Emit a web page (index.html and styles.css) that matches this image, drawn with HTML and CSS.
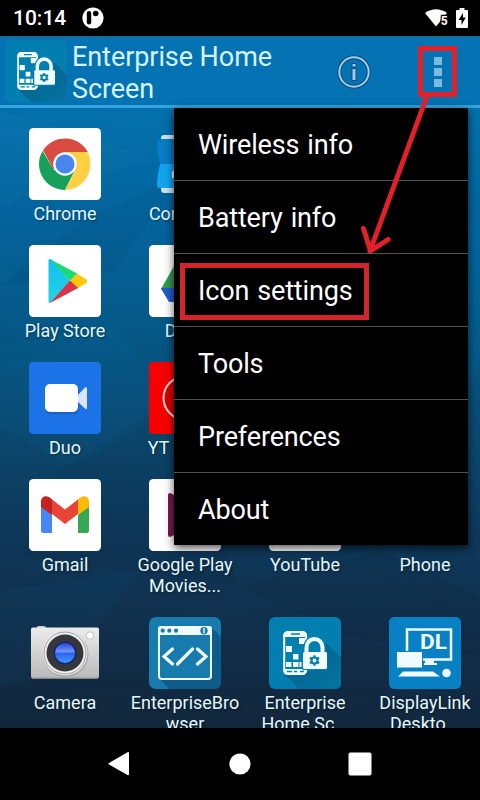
FILE: index.html
```html
<!DOCTYPE html>
<html lang="en">
<head>
<meta charset="utf-8">
<title>Enterprise Home Screen</title>
<link rel="stylesheet" href="styles.css">
</head>
<body>
<svg class="defs" width="0" height="0" aria-hidden="true">
  <defs>
    <linearGradient id="cam" x1="0" y1="0" x2="0" y2="1"><stop offset="0" stop-color="#ececec"/><stop offset="1" stop-color="#b9b9b9"/></linearGradient>
    <linearGradient id="lens" x1="0" y1="0" x2="0" y2="1"><stop offset="0" stop-color="#2949d6"/><stop offset=".45" stop-color="#7495ff"/><stop offset=".5" stop-color="#2f60ee"/><stop offset="1" stop-color="#3f9cff"/></linearGradient>
    <linearGradient id="play" x1="0" y1="0" x2="0" y2="1"><stop offset="0" stop-color="#14bdf0"/><stop offset="1" stop-color="#20d5e5"/></linearGradient>
    <linearGradient id="long" x1="0" y1="0" x2="1" y2="1"><stop offset="0" stop-color="#035f88"/><stop offset="1" stop-color="#0474a2"/></linearGradient>
    <symbol id="ehs" viewBox="0 0 72 72">
      <rect width="72" height="72" rx="6" fill="#037eb0"/>
      <path d="M57 26L72 41V66Q72 72 66 72H30L16 58L55 52Z" fill="url(#long)"/>
      <rect x="15.200" y="15" width="22" height="42" rx="4.500" fill="#037eb0" stroke="#f2fcff" stroke-width="2"/>
      <path d="M14.200 20V18Q15 14 19 14H33.500Q37 14 38 18V20ZM14.200 52H38V54Q37 58 33.500 58H19Q15 58 14.200 54Z" fill="#f2fcff"/>
      <path d="M22 17H31M18 54.500H23M25 54.500H28M31 54.500H35" stroke="#037eb0" stroke-width="1.500"/>
      <path d="M30 21H36V27H30ZM17 29H23V35H17ZM24 37H29.500V42.500H24ZM17 45H22.500V50H17ZM24 45H29.500V50H24ZM30.500 45H35V50H30.500Z" fill="#f2fcff"/>
      <path d="M37.500 36V30.500A8 8.500 0 0 1 53.500 30.500V36" fill="none" stroke="#037eb0" stroke-width="6.500"/>
      <rect x="32.500" y="34" width="26" height="19" rx="2" fill="#037eb0"/>
      <path d="M37.500 36V30.500A8 8.500 0 0 1 53.500 30.500V36" fill="none" stroke="#f2fcff" stroke-width="4"/>
      <rect x="34" y="35" width="24" height="17" rx="1.500" fill="#f2fcff"/>
      <circle cx="45.500" cy="43.500" r="3" fill="none" stroke="#037eb0" stroke-width="2.200"/>
      <path d="M45.500 38.200V40.500M45.500 46.500V48.800M40.900 40.800L42.900 42M48.100 45L50.100 46.200M40.900 46.200L42.900 45M48.100 42L50.100 40.800" stroke="#037eb0" stroke-width="2.200"/>
    </symbol>
  </defs>
</svg>

<div class="screen">
  <div class="status">
    <span class="clock">10:14</span>
    <svg class="notif" width="22" height="22" viewBox="0 0 22 22"><circle cx="11" cy="11" r="10.600" fill="#fff"/><rect x="4.800" y="4" width="4.400" height="13.500" rx="2.200"/><circle cx="13.700" cy="6.500" r="2.800"/></svg>
    <svg class="wifi" width="23" height="20" viewBox="0 0 23 20"><path d="M0 5Q11 -2.500 22 5L11 18.500Z" fill="#fff"/><text x="15.700" y="17" class="band">5</text></svg>
    <svg width="12" height="20" viewBox="0 0 12 20"><path d="M3.500 0H8.500V2H11Q12 2 12 3V19Q12 20 11 20H1Q0 20 0 19V3Q0 2 1 2H3.500Z" fill="#fff"/><path d="M7 5L2.500 12H5.500V17L9.700 9.500H7Z" fill="#000"/></svg>
  </div>

  <div class="home">
    <svg class="facets" width="480" height="692" viewBox="0 0 480 692" preserveAspectRatio="none">
      <path d="M0 170L65 145L155 125L85 98L0 76Z" fill="#fff" opacity=".018"/>
      <path d="M0 250L115 235L180 140L90 180Z" fill="#000" opacity=".035"/>
      <path d="M0 310L120 290L165 380L70 430L0 390Z" fill="#00a0e0" opacity=".045"/>
      <path d="M60 432L160 372L240 550L20 520Z" fill="#000" opacity=".04"/>
      <path d="M240 550L380 515L480 560V620L350 600Z" fill="#000" opacity=".05"/>
      <path d="M0 555L140 535L60 640L0 650Z" fill="#00a0e0" opacity=".04"/>
      <path d="M450 200L480 180V330L466 350Z" fill="#00a0e0" opacity=".07"/>
    </svg>

    <header class="bar">
      <svg class="logo" width="62" height="62"><use href="#ehs"/></svg>
      <h1 class="title">Enterprise Home Screen</h1>
      <svg class="info" width="34" height="34" viewBox="0 0 34 34"><circle cx="17" cy="17" r="14.700" fill="none" stroke="#104f78" stroke-width="4.200"/><circle cx="17" cy="17" r="14.700" fill="none" stroke="#9bcdec" stroke-width="2"/><path d="M15 8.500H19V12H15ZM15 13.500H19V25.500H15Z" fill="#9bcdec" stroke="#104f78"/></svg>
      <div class="overflow"><i></i><i></i><i></i></div>
    </header>

    <main class="apps">
      <div class="app">
        <svg class="icon" viewBox="0 0 72 72"><rect width="72" height="72" rx="4.500" fill="#fff"/><path d="M13.500 23A26 26 0 0 0 36 62L46 42L36 36L25 42Z" fill="#17a05a"/><path d="M58.500 24A26 26 0 0 1 36 62L46 43L36 24Z" fill="#ffd042"/><path d="M14 22.500L25 42L29 28L36 24H58.800A26 26 0 0 0 14 22.500Z" fill="#d94a40"/><circle cx="36" cy="36" r="11.800" fill="#f7faff"/><circle cx="36" cy="36" r="9.500" fill="#4986ee"/></svg>
        <span>Chrome</span>
      </div>
      <div class="app">
        <svg class="icon" viewBox="0 0 72 72"><path d="M12 10Q12 7 15 7H60V65H15Q12 65 12 61Z" fill="#cfe2ee"/><path d="M10 11H62V36H11Q7 20 8 13Q8 11 10 11Z" fill="#087cc4"/><path d="M11 36H62V60H10Q8 60 8 57Q8 49 11 36Z" fill="#12a5ee"/><path d="M23 50V44Q24 42 28 42H48V50Z" fill="#e7f4ff"/></svg>
        <span>Contacts</span>
      </div>
      <div class="app"></div>
      <div class="app"></div>

      <div class="app">
        <svg class="icon" viewBox="0 0 72 72"><rect width="72" height="72" rx="4.500" fill="#fff"/><path d="M19.500 15Q20 13.500 22 14.500L41 36L22 57.500Q20 58.500 19.500 57Z" fill="url(#play)"/><path d="M21 14L49 29L41 36Z" fill="#18db78"/><path d="M48 28.500L57.500 34.500Q59 36 57.500 38L48 43.500L40.500 36Z" fill="#fdc710"/><path d="M21 58L49 43L41 35.500Z" fill="#db3448"/></svg>
        <span>Play Store</span>
      </div>
      <div class="app">
        <svg class="icon" viewBox="0 0 72 72"><rect width="72" height="72" rx="4.500" fill="#fff"/><path d="M29 14H43L36 27L20 56L12 44Z" fill="#329b4d"/><path d="M12 43H60L53 57H20Z" fill="#245bd0"/><path d="M43 14L60 43H46L33 21Z" fill="#fbbc04"/></svg>
        <span>Drive</span>
      </div>
      <div class="app"></div>
      <div class="app"></div>

      <div class="app">
        <svg class="icon" viewBox="0 0 72 72"><rect width="72" height="72" rx="4.500" fill="#1c73e8"/><rect x="16" y="23.500" width="34" height="29" rx="5" fill="#1555b0" opacity=".55"/><path d="M48 34L56 25.500Q58 24 58 27V46Q58 48 56 46.500L48 39Z" fill="#dbe5fa"/><rect x="16" y="22" width="33" height="28" rx="5" fill="#fff"/></svg>
        <span>Duo</span>
      </div>
      <div class="app">
        <svg class="icon" viewBox="0 0 72 72"><rect width="72" height="72" rx="4.500" fill="#f90000"/><circle cx="36" cy="36" r="21.500" fill="#d80000" stroke="#ffd6d6" stroke-width="2"/><path d="M30 26L46 36L30 46Z" fill="#fff"/></svg>
        <span>YT Music</span>
      </div>
      <div class="app"></div>
      <div class="app"></div>

      <div class="app">
        <svg class="icon" viewBox="0 0 72 72"><rect width="72" height="72" rx="4.500" fill="#fff"/><path d="M12 26L23 35V54H14.500Q12 54 12 51.500Z" fill="#4587f4"/><path d="M60 26L49 35V54H57.500Q60 54 60 51.500Z" fill="#34a852"/><path d="M22.500 20L36 30.500L49.500 20V34.500L36 45L22.500 34.500Z" fill="#e94436"/><path d="M12 28V23C12 17 18 15 23 20.500V36Z" fill="#c5221f"/><path d="M60 28V23C60 17 54 15 49 20.500V36Z" fill="#fbbc04"/></svg>
        <span>Gmail</span>
      </div>
      <div class="app">
        <svg class="icon" viewBox="0 0 72 72"><rect width="72" height="72" rx="4.500" fill="#fff"/><path d="M19 16Q19 14 21 14Q50 27 50 36Q50 45 21 58Q19 58 19 56Z" fill="#751b50"/></svg>
        <span>Google Play Movies...</span>
      </div>
      <div class="app">
        <svg class="icon" viewBox="0 0 72 72"><rect width="72" height="72" rx="4.500" fill="#fff"/></svg>
        <span>YouTube</span>
      </div>
      <div class="app"><div class="icon"></div><span>Phone</span></div>

      <div class="app">
        <svg class="icon" viewBox="0 0 72 72"><path d="M8 11V10Q8 9 10 9H15Q17 9 17 11Z" fill="#c9c9c9"/><rect x="2" y="10.500" width="68" height="51" rx="2" fill="url(#cam)"/><path d="M3 61H69" stroke="#999" stroke-width="1"/><circle cx="36.500" cy="37" r="23" fill="#a5a5a5"/><circle cx="36" cy="36" r="22.500" fill="#eee"/><circle cx="36" cy="36" r="21" fill="none" stroke="#a0a0a0"/><circle cx="36" cy="36" r="18.500" fill="#35373d"/><circle cx="36" cy="36" r="11.500" fill="#17266a"/><circle cx="36" cy="36" r="10" fill="url(#lens)"/><circle cx="61" cy="18.500" r="3.700" fill="#fff" stroke="#c0c0c0"/></svg>
        <span>Camera</span>
      </div>
      <div class="app">
        <svg class="icon" viewBox="0 0 72 72"><rect width="72" height="72" rx="7" fill="#177bad"/><path d="M62 10L72 20V65Q72 72 65 72H20L10 61Z" fill="#0e5c89"/><rect x="10" y="10" width="52" height="52" rx="3" fill="#177bad" stroke="#f0fbff" stroke-width="2"/><path d="M9 18V12Q9 9 12 9H60Q63 9 63 12V18Z" fill="#f0fbff"/><g fill="#177bad"><circle cx="13.700" cy="13.700" r="2.100"/><circle cx="20.300" cy="13.700" r="2.100"/><circle cx="27" cy="13.700" r="2.100"/><circle cx="55" cy="13.700" r="3.700"/></g><path d="M55 11V16.500" stroke="#f0fbff" stroke-width="1.400"/><path d="M23.500 32L15 39.500L23.500 47M48.500 32L57 39.500L48.500 47M43.500 32L28.500 47" fill="none" stroke="#f0fbff" stroke-width="3.200" stroke-linecap="round"/></svg>
        <span>EnterpriseBrowser</span>
      </div>
      <div class="app">
        <svg class="icon"><use href="#ehs"/></svg>
        <span>Enterprise Home Sc...</span>
      </div>
      <div class="app">
        <svg class="icon" viewBox="0 0 72 72"><rect width="72" height="72" rx="5" fill="#0780c4"/><path d="M18 34V12.500H62V42.500H34" fill="none" stroke="#f0fbff" stroke-width="2.500"/><text x="31" y="32" class="dl" textLength="27" lengthAdjust="spacingAndGlyphs">DL</text><path d="M8 35H33V50.500H8ZM36 42H45V46H48V48H35V46H36ZM14 54.500H44L51 59.500H9Z" fill="#f0fbff"/><circle cx="57.500" cy="56" r="4.300" fill="#f0fbff"/></svg>
        <span>DisplayLink Deskto...</span>
      </div>
    </main>
  </div>

  <nav class="nav">
    <svg width="24" height="26" viewBox="0 0 24 26"><path d="M1 12L19.500 1.300Q21 .5 21 2V23Q21 24.800 19.500 24L1 13.500Q-.5 12.800 1 12Z" fill="#fff"/></svg>
    <svg width="22" height="22" viewBox="0 0 22 22"><circle cx="11" cy="11" r="10.600" fill="#fff"/></svg>
    <svg width="24" height="24" viewBox="0 0 24 24"><rect x=".5" y=".5" width="23" height="23" rx="2" fill="#fff"/></svg>
  </nav>

  <ul class="menu">
    <li>Wireless info</li>
    <li>Battery info</li>
    <li>Icon settings</li>
    <li>Tools</li>
    <li>Preferences</li>
    <li>About</li>
  </ul>

  <svg class="marks" width="480" height="800" viewBox="0 0 480 800" fill="none" stroke="#e3202a" stroke-width="5">
    <rect x="420.500" y="48.500" width="34" height="46"/>
    <path d="M427 96L370 251M363.500 228.500L370.500 251L388 239.500" stroke-linecap="round" stroke-linejoin="round"/>
    <rect x="182.500" y="265.500" width="184" height="52" stroke="#d3242b"/>
  </svg>
</div>
</body>
</html>
```
FILE: styles.css
```css
* { box-sizing: border-box; }

body {
  margin: 0;
  background: #000;
  font-family: Roboto, "Liberation Sans", sans-serif;
  color: #fff;
}

.defs { position: absolute; }

.screen {
  position: relative;
  display: flex;
  flex-direction: column;
  width: 480px;
  height: 800px;
  overflow: hidden;
}

.status {
  display: flex;
  align-items: center;
  height: 36px;
  padding: 0 12px 0 13px;
}
.clock { font-size: 21px; font-weight: 500; line-height: 37px; width: 69px; }
.wifi { margin-left: auto; margin-right: 8px; }
.band { font-size: 12px; font-weight: 700; fill: #fff; stroke: #000; stroke-width: 2.5px; paint-order: stroke; }

.home {
  position: relative;
  height: 692px;
  overflow: hidden;
  background: linear-gradient(182deg, #0474b4 0%, #0371ad 12%, #04639c 28%, #055887 43%, #0b4a72 56%, #0e395b 71%, #112d48 88%, #12273b 100%);
}
.facets { position: absolute; inset: 0; }

.bar {
  position: relative;
  display: flex;
  align-items: center;
  height: 72px;
  padding: 0 38px 3px 5px;
  background: #0472b3;
  border-top: 1px solid #28668a;
  border-bottom: 3px solid #35a5df;
}
.logo { flex: none; margin-top: 3px; }
.title {
  margin: 0 0 0 5px;
  width: 230px;
  font-size: 27px;
  font-weight: 400;
  line-height: 32px;
  letter-spacing: -.07px;
  color: #d3f4ff;
  padding-top: 6px;
}
.info { margin: 4px 0 0 35px; flex: none; }
.overflow { display: grid; gap: 3px; margin: 4px 0 0 auto; }
.overflow i { width: 8px; height: 8px; background: #7bbbe0; }

.apps {
  position: relative;
  display: grid;
  grid-template-columns: repeat(4, 120px);
  padding: 20px 0 0 5px;
}
.app {
  display: flex;
  flex-direction: column;
  align-items: center;
  min-height: 117px;
  padding-bottom: 21px;
  font-size: 18px;
  line-height: 21px;
  text-align: center;
  color: #e3f8ff;
}
.icon { width: 72px; height: 72px; flex: none; }
.app span { width: 110px; margin-top: 3px; overflow-wrap: anywhere; text-shadow: 1px 1px 2px rgba(0, 0, 0, .4); }
.dl { font-size: 20.5px; font-weight: 700; fill: #f0fbff; }

.nav {
  display: flex;
  flex: 1;
  align-items: center;
  justify-content: space-between;
  padding: 0 108px;
  background: #000;
}

.menu {
  position: absolute;
  left: 174px;
  top: 108px;
  width: 294px;
  margin: 0;
  padding: 0;
  list-style: none;
  background: #000;
  box-shadow: 0 3px 9px rgba(0, 0, 0, .7);
}
.menu li {
  height: 73px;
  padding-left: 24px;
  font-size: 27px;
  line-height: 75px;
  letter-spacing: -.15px;
  word-spacing: 1.5px;
  border-bottom: 1px solid #515151;
}
.menu li:last-child { height: 72px; border-bottom: 0; }

.marks { position: absolute; inset: 0; }
```
